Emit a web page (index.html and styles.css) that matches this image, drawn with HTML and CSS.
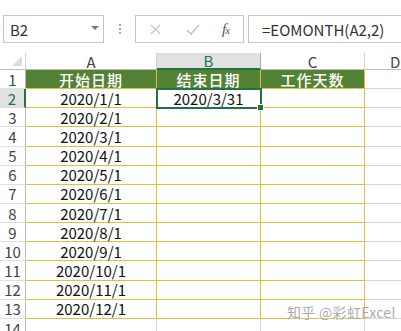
FILE: index.html
```html
<!DOCTYPE html>
<html>
<head>
<meta charset="utf-8">
<link rel="stylesheet" href="styles.css">
</head>
<body>
<div class="bar">
  <div class="namebox"><span>B2</span><span class="caret"></span></div>
  <div class="dots"><i></i><i></i><i></i></div>
  <div class="btnbox">
    <svg class="x" width="11" height="11" viewBox="0 0 11 11"><path d="M1 1L10 10M10 1L1 10" stroke="#c4c4c4" stroke-width="1.3" fill="none"/></svg>
    <svg class="ok" width="14" height="11" viewBox="0 0 14 11"><path d="M1 6L5 10L13 1" stroke="#c4c4c4" stroke-width="1.6" fill="none"/></svg>
    <span class="fx"><i>f</i><sub>x</sub></span>
  </div>
  <div class="formula">=EOMONTH(A2,2)</div>
</div>
<div class="sheet">
  <div class="corner"><span class="tri"></span></div>
  <div class="ch">A</div><div class="ch sel">B</div><div class="ch">C</div><div class="ch last">D</div>

  <div class="rh">1</div><div class="c hd">开始日期</div><div class="c hd">结束日期</div><div class="c hd">工作天数</div><div class="g"></div>
  <div class="rh sel">2</div><div class="c">2020/1/1</div><div class="c active">2020/3/31<span class="handle"></span></div><div class="c"></div><div class="g"></div>
  <div class="rh">3</div><div class="c">2020/2/1</div><div class="c"></div><div class="c"></div><div class="g"></div>
  <div class="rh">4</div><div class="c">2020/3/1</div><div class="c"></div><div class="c"></div><div class="g"></div>
  <div class="rh">5</div><div class="c">2020/4/1</div><div class="c"></div><div class="c"></div><div class="g"></div>
  <div class="rh">6</div><div class="c">2020/5/1</div><div class="c"></div><div class="c"></div><div class="g"></div>
  <div class="rh">7</div><div class="c">2020/6/1</div><div class="c"></div><div class="c"></div><div class="g"></div>
  <div class="rh">8</div><div class="c">2020/7/1</div><div class="c"></div><div class="c"></div><div class="g"></div>
  <div class="rh">9</div><div class="c">2020/8/1</div><div class="c"></div><div class="c"></div><div class="g"></div>
  <div class="rh">10</div><div class="c">2020/9/1</div><div class="c"></div><div class="c"></div><div class="g"></div>
  <div class="rh">11</div><div class="c">2020/10/1</div><div class="c"></div><div class="c"></div><div class="g"></div>
  <div class="rh">12</div><div class="c">2020/11/1</div><div class="c"></div><div class="c"></div><div class="g"></div>
  <div class="rh">13</div><div class="c">2020/12/1</div><div class="c"></div><div class="c"></div><div class="g"></div>
  <div class="rh">14</div><div class="g"></div><div class="g"></div><div class="g"></div><div class="g"></div>
</div>
<div class="wm">知乎 @彩虹Excel</div>
</body>
</html>
```
FILE: styles.css
```css
html, body {
  margin: 0;
  padding: 0;
  background: #fff;
  width: 401px;
  height: 331px;
  overflow: hidden;
  font-family: "Noto Sans CJK SC", "Open Sans", sans-serif;
  color: #222;
}
.bar {
  display: flex;
  align-items: stretch;
  height: 28px;
  margin-top: 15px;
  padding-left: 3px;
}
.namebox {
  box-sizing: border-box;
  width: 101px;
  border: 1px solid #c6c6c6;
  display: flex;
  align-items: center;
  justify-content: space-between;
  padding: 0 4px 0 6px;
  font-size: 15px;
  color: #333;
}
.caret {
  width: 0; height: 0;
  border-left: 4px solid transparent;
  border-right: 4px solid transparent;
  border-top: 4px solid #777;
  margin-bottom: 2px;
}
.dots {
  width: 31px;
  display: flex;
  flex-direction: column;
  align-items: center;
  justify-content: center;
  gap: 2px;
}
.dots i {
  width: 2px; height: 2px;
  background: #aaa;
  display: block;
}
.btnbox {
  box-sizing: border-box;
  width: 109px;
  border: 1px solid #c6c6c6;
  display: flex;
  align-items: center;
  padding-left: 14px;
}
.btnbox .ok { margin-left: 25px; }
.fx {
  margin-left: 22px;
  font-family: "Liberation Serif", serif;
  font-size: 15px;
  color: #555;
}
.fx sub { font-size: 11px; vertical-align: 0; font-style: italic; margin-left: -1px; }
.formula {
  box-sizing: border-box;
  margin-left: 4px;
  flex: 1;
  border: 1px solid #c6c6c6;
  border-right: none;
  display: flex;
  align-items: center;
  padding-left: 13px;
  font-size: 15px;
  color: #333;
}
.sheet {
  margin-top: 10px;
  display: grid;
  grid-template-columns: 26px 131px 104px 104px 1fr;
  grid-template-rows: 17px repeat(13, 19.15px) 20px;
}
.sheet > div {
  box-sizing: border-box;
  display: flex;
  align-items: center;
  justify-content: center;
  position: relative;
  line-height: 15px;
}
.corner {
  border-right: 1px solid #d4d4d4;
  border-bottom: 1px solid #bbb;
}
.tri {
  position: absolute;
  right: 3px; bottom: 3px;
  width: 0; height: 0;
  border-left: 10px solid transparent;
  border-bottom: 10px solid #dcdcdc;
}
.ch {
  font-size: 15px;
  color: #444;
  border-right: 1px solid #d4d4d4;
  border-bottom: 1px solid #bbb;
}
.ch.sel {
  background: #e1e1e1;
  color: #217346;
  border-bottom: 2px solid #217346;
  border-right-color: #ababab;
}
.ch.last { justify-content: flex-start; padding-left: 25px; border-right: none; }
.rh {
  font-size: 15px;
  color: #444;
  border-right: 1px solid #bbb;
  border-bottom: 1px solid #e0e0e0;
}
.rh.sel {
  background: #e1e1e1;
  color: #217346;
  border-right: 2px solid #217346;
}
.c {
  font-size: 15px;
  color: #111;
  border-right: 1px solid #e4bf3e;
  border-bottom: 1px solid #e4bf3e;
}
.c.hd {
  background: #548235;
  color: #fff;
  font-weight: 500;
  letter-spacing: 1px;
}
.c.active {
  outline: 2px solid #217346;
  outline-offset: -1px;
  z-index: 2;
}
.handle {
  position: absolute;
  right: -4px; bottom: -4px;
  width: 5px; height: 5px;
  background: #217346;
  border: 1px solid #fff;
}
.g {
  border-right: 1px solid #d4d4d4;
  border-bottom: 1px solid #d4d4d4;
}
.sheet > .g:nth-child(5n) { border-right: none; }
.wm {
  position: absolute;
  left: 287px;
  top: 302px;
  font-size: 14px;
  color: rgba(140,140,140,0.75);
  text-shadow: 0 0 2px #fff;
  letter-spacing: 0.3px;
  z-index: 5;
}
```
